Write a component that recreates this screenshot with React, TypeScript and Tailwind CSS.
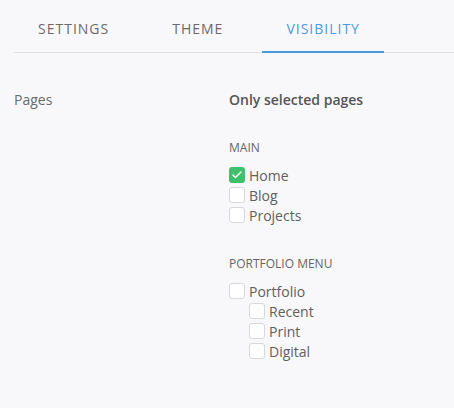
import { Check } from 'lucide-react';

interface Page {
  label: string;
  checked?: boolean;
  children?: Page[];
}

const groups: { title: string; pages: Page[] }[] = [
  {
    title: 'MAIN',
    pages: [{ label: 'Home', checked: true }, { label: 'Blog' }, { label: 'Projects' }],
  },
  {
    title: 'PORTFOLIO MENU',
    pages: [
      {
        label: 'Portfolio',
        children: [{ label: 'Recent' }, { label: 'Print' }, { label: 'Digital' }],
      },
    ],
  },
];

function CheckRow({ page }: { page: Page }) {
  return (
    <div>
      <label className="flex h-5 items-center gap-1 text-[14px] text-[#5f5f5f]">
        {page.checked ? (
          <span className="flex h-4 w-4 items-center justify-center rounded-[3px] bg-[#3ec06c]">
            <Check className="h-3 w-3 text-white" strokeWidth={3} />
          </span>
        ) : (
          <span className="h-4 w-4 rounded-[3px] border border-[#d8d8dc] bg-white" />
        )}
        <span>{page.label}</span>
      </label>
      {page.children && (
        <div className="pl-5">
          {page.children.map((c) => (
            <CheckRow key={c.label} page={c} />
          ))}
        </div>
      )}
    </div>
  );
}

export default function App() {
  const tabs = ['SETTINGS', 'THEME', 'VISIBILITY'];
  const active = 'VISIBILITY';

  return (
    <div className="h-[408px] w-[454px] bg-[#f8f8fa] font-['Open_Sans',sans-serif]">
      {/* tabs */}
      <div className="ml-[14px] flex h-[53px] gap-[15px] border-b border-[#e2e2e6]">
        {tabs.map((t) => (
          <div
            key={t}
            className={
              t === active
                ? '-mb-px flex items-center border-b-2 border-[#4a9be0] px-6 pt-[5px] text-[14px] tracking-[1px] text-[#4a9be0]'
                : 'flex items-center px-6 pt-[4px] text-[14px] tracking-[1px] text-[#6a6a6a]'
            }
          >
            {t}
          </div>
        ))}
      </div>

      {/* body */}
      <div className="flex px-[14px] pt-[37px]">
        <div className="w-[215px] text-[14px] leading-5 text-[#6a6a6a]">Pages</div>
        <div>
          <div className="text-[14px] font-semibold leading-5 text-[#555]">Only selected pages</div>
          {groups.map((g, i) => (
            <div key={g.title} className={i === 0 ? 'mt-[30px]' : 'mt-[31px]'}>
              <div className="mb-[9px] text-[12px] leading-4 text-[#666]">{g.title}</div>
              {g.pages.map((p) => (
                <CheckRow key={p.label} page={p} />
              ))}
            </div>
          ))}
        </div>
      </div>
    </div>
  );
}
